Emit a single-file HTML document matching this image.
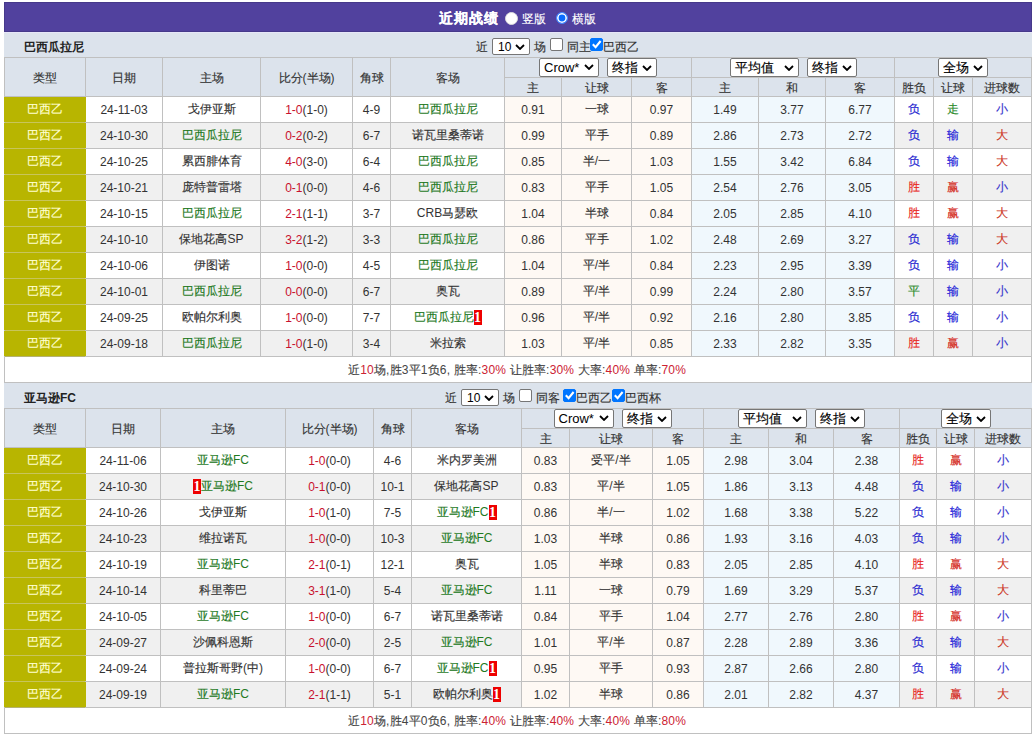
<!DOCTYPE html><html><head><meta charset="utf-8"><style>
html,body{margin:0;padding:0;background:#fff;width:1033px;height:735px;overflow:hidden}
body{font-family:"Liberation Sans",sans-serif;font-size:12px;color:#333;position:relative;font-weight:500}
div{position:absolute;box-sizing:border-box;white-space:nowrap}
.ttl{font-weight:bold;color:#222;font-size:12px}
.ctrl{display:flex;align-items:center;color:#333;white-space:pre}
.title{color:#fff;font-weight:bold;font-size:14px;letter-spacing:1px;white-space:pre;-webkit-text-stroke:0.3px #fff}
.t12{font-size:12px;font-weight:normal}
.rad{width:12px;height:12px;border-radius:50%;background:#fff;box-sizing:border-box;border:1px solid #ddd}
.rad.on{border:1px solid #4d8cff;background:#0a6cff;box-shadow:inset 0 0 0 1.6px #fff}
.sel{display:inline-flex;align-items:center;justify-content:space-between;box-sizing:border-box;height:19px;border:1px solid #767676;background:#fff;border-radius:2px;padding:0 4px 0 4px;font-size:13px;color:#000}
.chev{display:block}
.k{-webkit-text-stroke:0.15px currentColor}
.ttl .k{-webkit-text-stroke:0}
.c{white-space:pre}
.sel2{box-sizing:border-box;border:1px solid #767676;background:#fff;border-radius:2px;font-size:13px;color:#000}
.cb{width:13px;height:13px;box-sizing:border-box;border:1px solid #767676;border-radius:2px;background:#fff;vertical-align:middle}
.cb.on{background:#0075ff;border-color:#0075ff}
.cb svg{display:block;margin:-1px}
.sel2 span,.sel2 svg{position:absolute}
.badge{display:inline-block;background:#e00;color:#fff;font-weight:bold;width:8px;height:15px;line-height:15px;text-align:center;font-size:14px;font-family:"Liberation Serif",serif;vertical-align:middle;overflow:hidden}
</style></head><body><div style="left:4px;top:2px;width:1028px;height:30px;background:#51419e;box-sizing:border-box;border:1px solid #46398a"></div>
<div class="title" style="left:439px;top:3px;height:30px;line-height:30px"><span class="k">近期战绩</span></div>
<div class="rad" style="left:505px;top:12px;width:13px;height:13px"></div>
<div class="t12" style="left:522px;top:4px;height:30px;line-height:30px;color:#fff;-webkit-text-stroke:0.2px #fff"><span class="k">竖版</span></div>
<div class="rad on" style="left:556px;top:12px"></div>
<div class="t12" style="left:572px;top:4px;height:30px;line-height:30px;color:#fff;-webkit-text-stroke:0.2px #fff"><span class="k">横版</span></div>
<div style="left:4px;top:32px;width:1028px;height:1px;background:#e6e6f8"></div>
<div style="left:4px;top:33px;width:1028px;height:24px;background:#dce3ec"></div>
<div class="ttl" style="left:24px;top:35px;height:24px;line-height:24px"><span class="k">巴西瓜拉尼</span></div>
<div class="t12" style="left:476px;top:35px;height:25px;line-height:25px;color:#333"><span class="k">近</span></div>
<div class="sel2" style="left:492px;top:38px;width:38px;height:17px"><span style="position:absolute;left:5px;top:1px;line-height:15px;font-size:12px">10</span><svg class="chev" style="position:absolute;left:22px;top:5px" width="10" height="6" viewBox="0 0 10 6"><path d="M1 1 L5 5 L9 1" fill="none" stroke="#000" stroke-width="1.8"/></svg></div>
<div class="t12" style="left:534px;top:35px;height:25px;line-height:25px;color:#333"><span class="k">场</span></div>
<div class="cb" style="left:550px;top:38px"></div>
<div class="t12" style="left:567px;top:35px;height:25px;line-height:25px;color:#333"><span class="k">同主</span></div>
<div class="cb on" style="left:590px;top:38px"><svg width="13" height="13" viewBox="0 0 13 13"><path d="M2.8 6.3 L5.6 9.2 L10.6 3" fill="none" stroke="#fff" stroke-width="2.1"/></svg></div>
<div class="t12" style="left:603px;top:35px;height:25px;line-height:25px;color:#333"><span class="k">巴西乙</span></div>
<div style="left:5px;top:58px;width:80px;height:38px;display:flex;align-items:center;justify-content:center;background:#dce3ec;color:#333"><span class="c"><span style="position:relative;top:1px"><span class="k">类型</span></span></span></div>
<div style="left:86px;top:58px;width:76px;height:38px;display:flex;align-items:center;justify-content:center;background:#dce3ec;color:#333"><span class="c"><span style="position:relative;top:1px"><span class="k">日期</span></span></span></div>
<div style="left:163px;top:58px;width:97px;height:38px;display:flex;align-items:center;justify-content:center;background:#dce3ec;color:#333"><span class="c"><span style="position:relative;top:1px"><span class="k">主场</span></span></span></div>
<div style="left:261px;top:58px;width:91px;height:38px;display:flex;align-items:center;justify-content:center;background:#dce3ec;color:#333"><span class="c"><span style="position:relative;top:1px"><span class="k">比分</span>(<span class="k">半场</span>)</span></span></div>
<div style="left:353px;top:58px;width:37px;height:38px;display:flex;align-items:center;justify-content:center;background:#dce3ec;color:#333"><span class="c"><span style="position:relative;top:1px"><span class="k">角球</span></span></span></div>
<div style="left:391px;top:58px;width:113px;height:38px;display:flex;align-items:center;justify-content:center;background:#dce3ec;color:#333"><span class="c"><span style="position:relative;top:1px"><span class="k">客场</span></span></span></div>
<div style="left:505px;top:58px;width:186px;height:19px;display:flex;align-items:center;justify-content:center;background:#dce3ec;"><span class="c"><span class="sel" style="width:60px">Crow*<svg class="chev" width="10" height="6" viewBox="0 0 10 6"><path d="M1 1 L5 5 L9 1" fill="none" stroke="#000" stroke-width="1.8"/></svg></span><span style="display:inline-block;width:8px"></span><span class="sel" style="width:50px"><span class="k">终指</span><svg class="chev" width="10" height="6" viewBox="0 0 10 6"><path d="M1 1 L5 5 L9 1" fill="none" stroke="#000" stroke-width="1.8"/></svg></span></span></div>
<div style="left:692px;top:58px;width:202px;height:19px;display:flex;align-items:center;justify-content:center;background:#dce3ec;"><span class="c"><span class="sel" style="width:69px"><span class="k">平均值</span><svg class="chev" width="10" height="6" viewBox="0 0 10 6"><path d="M1 1 L5 5 L9 1" fill="none" stroke="#000" stroke-width="1.8"/></svg></span><span style="display:inline-block;width:8px"></span><span class="sel" style="width:50px"><span class="k">终指</span><svg class="chev" width="10" height="6" viewBox="0 0 10 6"><path d="M1 1 L5 5 L9 1" fill="none" stroke="#000" stroke-width="1.8"/></svg></span></span></div>
<div style="left:895px;top:58px;width:136px;height:19px;display:flex;align-items:center;justify-content:center;background:#dce3ec;"><span class="c"><span class="sel" style="width:50px"><span class="k">全场</span><svg class="chev" width="10" height="6" viewBox="0 0 10 6"><path d="M1 1 L5 5 L9 1" fill="none" stroke="#000" stroke-width="1.8"/></svg></span></span></div>
<div style="left:505px;top:78px;width:56px;height:18px;display:flex;align-items:center;justify-content:center;background:#dce3ec;color:#333"><span class="c"><span style="position:relative;top:1px"><span class="k">主</span></span></span></div>
<div style="left:562px;top:78px;width:69px;height:18px;display:flex;align-items:center;justify-content:center;background:#dce3ec;color:#333"><span class="c"><span style="position:relative;top:1px"><span class="k">让球</span></span></span></div>
<div style="left:632px;top:78px;width:59px;height:18px;display:flex;align-items:center;justify-content:center;background:#dce3ec;color:#333"><span class="c"><span style="position:relative;top:1px"><span class="k">客</span></span></span></div>
<div style="left:692px;top:78px;width:66px;height:18px;display:flex;align-items:center;justify-content:center;background:#dce3ec;color:#333"><span class="c"><span style="position:relative;top:1px"><span class="k">主</span></span></span></div>
<div style="left:759px;top:78px;width:66px;height:18px;display:flex;align-items:center;justify-content:center;background:#dce3ec;color:#333"><span class="c"><span style="position:relative;top:1px"><span class="k">和</span></span></span></div>
<div style="left:826px;top:78px;width:68px;height:18px;display:flex;align-items:center;justify-content:center;background:#dce3ec;color:#333"><span class="c"><span style="position:relative;top:1px"><span class="k">客</span></span></span></div>
<div style="left:895px;top:78px;width:38px;height:18px;display:flex;align-items:center;justify-content:center;background:#dce3ec;color:#333"><span class="c"><span style="position:relative;top:1px"><span class="k">胜负</span></span></span></div>
<div style="left:934px;top:78px;width:38px;height:18px;display:flex;align-items:center;justify-content:center;background:#dce3ec;color:#333"><span class="c"><span style="position:relative;top:1px"><span class="k">让球</span></span></span></div>
<div style="left:973px;top:78px;width:58px;height:18px;display:flex;align-items:center;justify-content:center;background:#dce3ec;color:#333"><span class="c"><span style="position:relative;top:1px"><span class="k">进球数</span></span></span></div>
<div style="left:4px;top:97px;width:82px;height:25px;background:#b8b500;display:flex;align-items:center;justify-content:center;color:#ffffd0"><span class="k">巴西乙</span></div>
<div style="left:86px;top:97px;width:76px;height:25px;display:flex;align-items:center;justify-content:center;background:#fff;"><span class="c">24-11-03</span></div>
<div style="left:163px;top:97px;width:97px;height:25px;display:flex;align-items:center;justify-content:center;background:#fff;"><span class="c"><span><span class="k">戈伊亚斯</span></span></span></div>
<div style="left:261px;top:97px;width:91px;height:25px;display:flex;align-items:center;justify-content:center;background:#fff;"><span class="c"><span style="color:#c8102e">1-0</span>(1-0)</span></div>
<div style="left:353px;top:97px;width:37px;height:25px;display:flex;align-items:center;justify-content:center;background:#fff;"><span class="c">4-9</span></div>
<div style="left:391px;top:97px;width:113px;height:25px;display:flex;align-items:center;justify-content:center;background:#fff;"><span class="c"><span style="color:#1f7a1f"><span class="k">巴西瓜拉尼</span></span></span></div>
<div style="left:505px;top:97px;width:56px;height:25px;display:flex;align-items:center;justify-content:center;background:#fef9f4;"><span class="c">0.91</span></div>
<div style="left:562px;top:97px;width:69px;height:25px;display:flex;align-items:center;justify-content:center;background:#fef9f4;"><span class="c"><span class="k">一球</span></span></div>
<div style="left:632px;top:97px;width:59px;height:25px;display:flex;align-items:center;justify-content:center;background:#fef9f4;"><span class="c">0.97</span></div>
<div style="left:692px;top:97px;width:66px;height:25px;display:flex;align-items:center;justify-content:center;background:#f0f8fd;"><span class="c">1.49</span></div>
<div style="left:759px;top:97px;width:66px;height:25px;display:flex;align-items:center;justify-content:center;background:#f0f8fd;"><span class="c">3.77</span></div>
<div style="left:826px;top:97px;width:68px;height:25px;display:flex;align-items:center;justify-content:center;background:#f0f8fd;"><span class="c">6.77</span></div>
<div style="left:895px;top:97px;width:38px;height:25px;display:flex;align-items:center;justify-content:center;background:#fff;"><span class="c"><span style="color:#1f1fd0"><span class="k">负</span></span></span></div>
<div style="left:934px;top:97px;width:38px;height:25px;display:flex;align-items:center;justify-content:center;background:#fff;"><span class="c"><span style="color:#2a8a2a"><span class="k">走</span></span></span></div>
<div style="left:973px;top:97px;width:58px;height:25px;display:flex;align-items:center;justify-content:center;background:#fff;"><span class="c"><span style="color:#3333cc"><span class="k">小</span></span></span></div>
<div style="left:4px;top:123px;width:82px;height:25px;background:#b8b500;display:flex;align-items:center;justify-content:center;color:#ffffd0"><span class="k">巴西乙</span></div>
<div style="left:86px;top:123px;width:76px;height:25px;display:flex;align-items:center;justify-content:center;background:#f0f0f0;"><span class="c">24-10-30</span></div>
<div style="left:163px;top:123px;width:97px;height:25px;display:flex;align-items:center;justify-content:center;background:#f0f0f0;"><span class="c"><span style="color:#1f7a1f"><span class="k">巴西瓜拉尼</span></span></span></div>
<div style="left:261px;top:123px;width:91px;height:25px;display:flex;align-items:center;justify-content:center;background:#f0f0f0;"><span class="c"><span style="color:#c8102e">0-2</span>(0-2)</span></div>
<div style="left:353px;top:123px;width:37px;height:25px;display:flex;align-items:center;justify-content:center;background:#f0f0f0;"><span class="c">6-7</span></div>
<div style="left:391px;top:123px;width:113px;height:25px;display:flex;align-items:center;justify-content:center;background:#f0f0f0;"><span class="c"><span><span class="k">诺瓦里桑蒂诺</span></span></span></div>
<div style="left:505px;top:123px;width:56px;height:25px;display:flex;align-items:center;justify-content:center;background:#fef9f4;"><span class="c">0.99</span></div>
<div style="left:562px;top:123px;width:69px;height:25px;display:flex;align-items:center;justify-content:center;background:#fef9f4;"><span class="c"><span class="k">平手</span></span></div>
<div style="left:632px;top:123px;width:59px;height:25px;display:flex;align-items:center;justify-content:center;background:#fef9f4;"><span class="c">0.89</span></div>
<div style="left:692px;top:123px;width:66px;height:25px;display:flex;align-items:center;justify-content:center;background:#f0f8fd;"><span class="c">2.86</span></div>
<div style="left:759px;top:123px;width:66px;height:25px;display:flex;align-items:center;justify-content:center;background:#f0f8fd;"><span class="c">2.73</span></div>
<div style="left:826px;top:123px;width:68px;height:25px;display:flex;align-items:center;justify-content:center;background:#f0f8fd;"><span class="c">2.72</span></div>
<div style="left:895px;top:123px;width:38px;height:25px;display:flex;align-items:center;justify-content:center;background:#f0f0f0;"><span class="c"><span style="color:#1f1fd0"><span class="k">负</span></span></span></div>
<div style="left:934px;top:123px;width:38px;height:25px;display:flex;align-items:center;justify-content:center;background:#f0f0f0;"><span class="c"><span style="color:#1a1ad8"><span class="k">输</span></span></span></div>
<div style="left:973px;top:123px;width:58px;height:25px;display:flex;align-items:center;justify-content:center;background:#f0f0f0;"><span class="c"><span style="color:#cc3322"><span class="k">大</span></span></span></div>
<div style="left:4px;top:149px;width:82px;height:25px;background:#b8b500;display:flex;align-items:center;justify-content:center;color:#ffffd0"><span class="k">巴西乙</span></div>
<div style="left:86px;top:149px;width:76px;height:25px;display:flex;align-items:center;justify-content:center;background:#fff;"><span class="c">24-10-25</span></div>
<div style="left:163px;top:149px;width:97px;height:25px;display:flex;align-items:center;justify-content:center;background:#fff;"><span class="c"><span><span class="k">累西腓体育</span></span></span></div>
<div style="left:261px;top:149px;width:91px;height:25px;display:flex;align-items:center;justify-content:center;background:#fff;"><span class="c"><span style="color:#c8102e">4-0</span>(3-0)</span></div>
<div style="left:353px;top:149px;width:37px;height:25px;display:flex;align-items:center;justify-content:center;background:#fff;"><span class="c">6-4</span></div>
<div style="left:391px;top:149px;width:113px;height:25px;display:flex;align-items:center;justify-content:center;background:#fff;"><span class="c"><span style="color:#1f7a1f"><span class="k">巴西瓜拉尼</span></span></span></div>
<div style="left:505px;top:149px;width:56px;height:25px;display:flex;align-items:center;justify-content:center;background:#fef9f4;"><span class="c">0.85</span></div>
<div style="left:562px;top:149px;width:69px;height:25px;display:flex;align-items:center;justify-content:center;background:#fef9f4;"><span class="c"><span class="k">半</span>/<span class="k">一</span></span></div>
<div style="left:632px;top:149px;width:59px;height:25px;display:flex;align-items:center;justify-content:center;background:#fef9f4;"><span class="c">1.03</span></div>
<div style="left:692px;top:149px;width:66px;height:25px;display:flex;align-items:center;justify-content:center;background:#f0f8fd;"><span class="c">1.55</span></div>
<div style="left:759px;top:149px;width:66px;height:25px;display:flex;align-items:center;justify-content:center;background:#f0f8fd;"><span class="c">3.42</span></div>
<div style="left:826px;top:149px;width:68px;height:25px;display:flex;align-items:center;justify-content:center;background:#f0f8fd;"><span class="c">6.84</span></div>
<div style="left:895px;top:149px;width:38px;height:25px;display:flex;align-items:center;justify-content:center;background:#fff;"><span class="c"><span style="color:#1f1fd0"><span class="k">负</span></span></span></div>
<div style="left:934px;top:149px;width:38px;height:25px;display:flex;align-items:center;justify-content:center;background:#fff;"><span class="c"><span style="color:#1a1ad8"><span class="k">输</span></span></span></div>
<div style="left:973px;top:149px;width:58px;height:25px;display:flex;align-items:center;justify-content:center;background:#fff;"><span class="c"><span style="color:#cc3322"><span class="k">大</span></span></span></div>
<div style="left:4px;top:175px;width:82px;height:25px;background:#b8b500;display:flex;align-items:center;justify-content:center;color:#ffffd0"><span class="k">巴西乙</span></div>
<div style="left:86px;top:175px;width:76px;height:25px;display:flex;align-items:center;justify-content:center;background:#f0f0f0;"><span class="c">24-10-21</span></div>
<div style="left:163px;top:175px;width:97px;height:25px;display:flex;align-items:center;justify-content:center;background:#f0f0f0;"><span class="c"><span><span class="k">庞特普雷塔</span></span></span></div>
<div style="left:261px;top:175px;width:91px;height:25px;display:flex;align-items:center;justify-content:center;background:#f0f0f0;"><span class="c"><span style="color:#c8102e">0-1</span>(0-0)</span></div>
<div style="left:353px;top:175px;width:37px;height:25px;display:flex;align-items:center;justify-content:center;background:#f0f0f0;"><span class="c">4-6</span></div>
<div style="left:391px;top:175px;width:113px;height:25px;display:flex;align-items:center;justify-content:center;background:#f0f0f0;"><span class="c"><span style="color:#1f7a1f"><span class="k">巴西瓜拉尼</span></span></span></div>
<div style="left:505px;top:175px;width:56px;height:25px;display:flex;align-items:center;justify-content:center;background:#fef9f4;"><span class="c">0.83</span></div>
<div style="left:562px;top:175px;width:69px;height:25px;display:flex;align-items:center;justify-content:center;background:#fef9f4;"><span class="c"><span class="k">平手</span></span></div>
<div style="left:632px;top:175px;width:59px;height:25px;display:flex;align-items:center;justify-content:center;background:#fef9f4;"><span class="c">1.05</span></div>
<div style="left:692px;top:175px;width:66px;height:25px;display:flex;align-items:center;justify-content:center;background:#f0f8fd;"><span class="c">2.54</span></div>
<div style="left:759px;top:175px;width:66px;height:25px;display:flex;align-items:center;justify-content:center;background:#f0f8fd;"><span class="c">2.76</span></div>
<div style="left:826px;top:175px;width:68px;height:25px;display:flex;align-items:center;justify-content:center;background:#f0f8fd;"><span class="c">3.05</span></div>
<div style="left:895px;top:175px;width:38px;height:25px;display:flex;align-items:center;justify-content:center;background:#f0f0f0;"><span class="c"><span style="color:#e8281e"><span class="k">胜</span></span></span></div>
<div style="left:934px;top:175px;width:38px;height:25px;display:flex;align-items:center;justify-content:center;background:#f0f0f0;"><span class="c"><span style="color:#d42a1a"><span class="k">赢</span></span></span></div>
<div style="left:973px;top:175px;width:58px;height:25px;display:flex;align-items:center;justify-content:center;background:#f0f0f0;"><span class="c"><span style="color:#3333cc"><span class="k">小</span></span></span></div>
<div style="left:4px;top:201px;width:82px;height:25px;background:#b8b500;display:flex;align-items:center;justify-content:center;color:#ffffd0"><span class="k">巴西乙</span></div>
<div style="left:86px;top:201px;width:76px;height:25px;display:flex;align-items:center;justify-content:center;background:#fff;"><span class="c">24-10-15</span></div>
<div style="left:163px;top:201px;width:97px;height:25px;display:flex;align-items:center;justify-content:center;background:#fff;"><span class="c"><span style="color:#1f7a1f"><span class="k">巴西瓜拉尼</span></span></span></div>
<div style="left:261px;top:201px;width:91px;height:25px;display:flex;align-items:center;justify-content:center;background:#fff;"><span class="c"><span style="color:#c8102e">2-1</span>(1-1)</span></div>
<div style="left:353px;top:201px;width:37px;height:25px;display:flex;align-items:center;justify-content:center;background:#fff;"><span class="c">3-7</span></div>
<div style="left:391px;top:201px;width:113px;height:25px;display:flex;align-items:center;justify-content:center;background:#fff;"><span class="c"><span>CRB<span class="k">马瑟欧</span></span></span></div>
<div style="left:505px;top:201px;width:56px;height:25px;display:flex;align-items:center;justify-content:center;background:#fef9f4;"><span class="c">1.04</span></div>
<div style="left:562px;top:201px;width:69px;height:25px;display:flex;align-items:center;justify-content:center;background:#fef9f4;"><span class="c"><span class="k">半球</span></span></div>
<div style="left:632px;top:201px;width:59px;height:25px;display:flex;align-items:center;justify-content:center;background:#fef9f4;"><span class="c">0.84</span></div>
<div style="left:692px;top:201px;width:66px;height:25px;display:flex;align-items:center;justify-content:center;background:#f0f8fd;"><span class="c">2.05</span></div>
<div style="left:759px;top:201px;width:66px;height:25px;display:flex;align-items:center;justify-content:center;background:#f0f8fd;"><span class="c">2.85</span></div>
<div style="left:826px;top:201px;width:68px;height:25px;display:flex;align-items:center;justify-content:center;background:#f0f8fd;"><span class="c">4.10</span></div>
<div style="left:895px;top:201px;width:38px;height:25px;display:flex;align-items:center;justify-content:center;background:#fff;"><span class="c"><span style="color:#e8281e"><span class="k">胜</span></span></span></div>
<div style="left:934px;top:201px;width:38px;height:25px;display:flex;align-items:center;justify-content:center;background:#fff;"><span class="c"><span style="color:#d42a1a"><span class="k">赢</span></span></span></div>
<div style="left:973px;top:201px;width:58px;height:25px;display:flex;align-items:center;justify-content:center;background:#fff;"><span class="c"><span style="color:#cc3322"><span class="k">大</span></span></span></div>
<div style="left:4px;top:227px;width:82px;height:25px;background:#b8b500;display:flex;align-items:center;justify-content:center;color:#ffffd0"><span class="k">巴西乙</span></div>
<div style="left:86px;top:227px;width:76px;height:25px;display:flex;align-items:center;justify-content:center;background:#f0f0f0;"><span class="c">24-10-10</span></div>
<div style="left:163px;top:227px;width:97px;height:25px;display:flex;align-items:center;justify-content:center;background:#f0f0f0;"><span class="c"><span><span class="k">保地花高</span>SP</span></span></div>
<div style="left:261px;top:227px;width:91px;height:25px;display:flex;align-items:center;justify-content:center;background:#f0f0f0;"><span class="c"><span style="color:#c8102e">3-2</span>(1-2)</span></div>
<div style="left:353px;top:227px;width:37px;height:25px;display:flex;align-items:center;justify-content:center;background:#f0f0f0;"><span class="c">3-3</span></div>
<div style="left:391px;top:227px;width:113px;height:25px;display:flex;align-items:center;justify-content:center;background:#f0f0f0;"><span class="c"><span style="color:#1f7a1f"><span class="k">巴西瓜拉尼</span></span></span></div>
<div style="left:505px;top:227px;width:56px;height:25px;display:flex;align-items:center;justify-content:center;background:#fef9f4;"><span class="c">0.86</span></div>
<div style="left:562px;top:227px;width:69px;height:25px;display:flex;align-items:center;justify-content:center;background:#fef9f4;"><span class="c"><span class="k">平手</span></span></div>
<div style="left:632px;top:227px;width:59px;height:25px;display:flex;align-items:center;justify-content:center;background:#fef9f4;"><span class="c">1.02</span></div>
<div style="left:692px;top:227px;width:66px;height:25px;display:flex;align-items:center;justify-content:center;background:#f0f8fd;"><span class="c">2.48</span></div>
<div style="left:759px;top:227px;width:66px;height:25px;display:flex;align-items:center;justify-content:center;background:#f0f8fd;"><span class="c">2.69</span></div>
<div style="left:826px;top:227px;width:68px;height:25px;display:flex;align-items:center;justify-content:center;background:#f0f8fd;"><span class="c">3.27</span></div>
<div style="left:895px;top:227px;width:38px;height:25px;display:flex;align-items:center;justify-content:center;background:#f0f0f0;"><span class="c"><span style="color:#1f1fd0"><span class="k">负</span></span></span></div>
<div style="left:934px;top:227px;width:38px;height:25px;display:flex;align-items:center;justify-content:center;background:#f0f0f0;"><span class="c"><span style="color:#1a1ad8"><span class="k">输</span></span></span></div>
<div style="left:973px;top:227px;width:58px;height:25px;display:flex;align-items:center;justify-content:center;background:#f0f0f0;"><span class="c"><span style="color:#cc3322"><span class="k">大</span></span></span></div>
<div style="left:4px;top:253px;width:82px;height:25px;background:#b8b500;display:flex;align-items:center;justify-content:center;color:#ffffd0"><span class="k">巴西乙</span></div>
<div style="left:86px;top:253px;width:76px;height:25px;display:flex;align-items:center;justify-content:center;background:#fff;"><span class="c">24-10-06</span></div>
<div style="left:163px;top:253px;width:97px;height:25px;display:flex;align-items:center;justify-content:center;background:#fff;"><span class="c"><span><span class="k">伊图诺</span></span></span></div>
<div style="left:261px;top:253px;width:91px;height:25px;display:flex;align-items:center;justify-content:center;background:#fff;"><span class="c"><span style="color:#c8102e">1-0</span>(0-0)</span></div>
<div style="left:353px;top:253px;width:37px;height:25px;display:flex;align-items:center;justify-content:center;background:#fff;"><span class="c">4-5</span></div>
<div style="left:391px;top:253px;width:113px;height:25px;display:flex;align-items:center;justify-content:center;background:#fff;"><span class="c"><span style="color:#1f7a1f"><span class="k">巴西瓜拉尼</span></span></span></div>
<div style="left:505px;top:253px;width:56px;height:25px;display:flex;align-items:center;justify-content:center;background:#fef9f4;"><span class="c">1.04</span></div>
<div style="left:562px;top:253px;width:69px;height:25px;display:flex;align-items:center;justify-content:center;background:#fef9f4;"><span class="c"><span class="k">平</span>/<span class="k">半</span></span></div>
<div style="left:632px;top:253px;width:59px;height:25px;display:flex;align-items:center;justify-content:center;background:#fef9f4;"><span class="c">0.84</span></div>
<div style="left:692px;top:253px;width:66px;height:25px;display:flex;align-items:center;justify-content:center;background:#f0f8fd;"><span class="c">2.23</span></div>
<div style="left:759px;top:253px;width:66px;height:25px;display:flex;align-items:center;justify-content:center;background:#f0f8fd;"><span class="c">2.95</span></div>
<div style="left:826px;top:253px;width:68px;height:25px;display:flex;align-items:center;justify-content:center;background:#f0f8fd;"><span class="c">3.39</span></div>
<div style="left:895px;top:253px;width:38px;height:25px;display:flex;align-items:center;justify-content:center;background:#fff;"><span class="c"><span style="color:#1f1fd0"><span class="k">负</span></span></span></div>
<div style="left:934px;top:253px;width:38px;height:25px;display:flex;align-items:center;justify-content:center;background:#fff;"><span class="c"><span style="color:#1a1ad8"><span class="k">输</span></span></span></div>
<div style="left:973px;top:253px;width:58px;height:25px;display:flex;align-items:center;justify-content:center;background:#fff;"><span class="c"><span style="color:#3333cc"><span class="k">小</span></span></span></div>
<div style="left:4px;top:279px;width:82px;height:25px;background:#b8b500;display:flex;align-items:center;justify-content:center;color:#ffffd0"><span class="k">巴西乙</span></div>
<div style="left:86px;top:279px;width:76px;height:25px;display:flex;align-items:center;justify-content:center;background:#f0f0f0;"><span class="c">24-10-01</span></div>
<div style="left:163px;top:279px;width:97px;height:25px;display:flex;align-items:center;justify-content:center;background:#f0f0f0;"><span class="c"><span style="color:#1f7a1f"><span class="k">巴西瓜拉尼</span></span></span></div>
<div style="left:261px;top:279px;width:91px;height:25px;display:flex;align-items:center;justify-content:center;background:#f0f0f0;"><span class="c"><span style="color:#c8102e">0-0</span>(0-0)</span></div>
<div style="left:353px;top:279px;width:37px;height:25px;display:flex;align-items:center;justify-content:center;background:#f0f0f0;"><span class="c">6-7</span></div>
<div style="left:391px;top:279px;width:113px;height:25px;display:flex;align-items:center;justify-content:center;background:#f0f0f0;"><span class="c"><span><span class="k">奥瓦</span></span></span></div>
<div style="left:505px;top:279px;width:56px;height:25px;display:flex;align-items:center;justify-content:center;background:#fef9f4;"><span class="c">0.89</span></div>
<div style="left:562px;top:279px;width:69px;height:25px;display:flex;align-items:center;justify-content:center;background:#fef9f4;"><span class="c"><span class="k">平</span>/<span class="k">半</span></span></div>
<div style="left:632px;top:279px;width:59px;height:25px;display:flex;align-items:center;justify-content:center;background:#fef9f4;"><span class="c">0.99</span></div>
<div style="left:692px;top:279px;width:66px;height:25px;display:flex;align-items:center;justify-content:center;background:#f0f8fd;"><span class="c">2.24</span></div>
<div style="left:759px;top:279px;width:66px;height:25px;display:flex;align-items:center;justify-content:center;background:#f0f8fd;"><span class="c">2.80</span></div>
<div style="left:826px;top:279px;width:68px;height:25px;display:flex;align-items:center;justify-content:center;background:#f0f8fd;"><span class="c">3.57</span></div>
<div style="left:895px;top:279px;width:38px;height:25px;display:flex;align-items:center;justify-content:center;background:#f0f0f0;"><span class="c"><span style="color:#2a8a2a"><span class="k">平</span></span></span></div>
<div style="left:934px;top:279px;width:38px;height:25px;display:flex;align-items:center;justify-content:center;background:#f0f0f0;"><span class="c"><span style="color:#1a1ad8"><span class="k">输</span></span></span></div>
<div style="left:973px;top:279px;width:58px;height:25px;display:flex;align-items:center;justify-content:center;background:#f0f0f0;"><span class="c"><span style="color:#3333cc"><span class="k">小</span></span></span></div>
<div style="left:4px;top:305px;width:82px;height:25px;background:#b8b500;display:flex;align-items:center;justify-content:center;color:#ffffd0"><span class="k">巴西乙</span></div>
<div style="left:86px;top:305px;width:76px;height:25px;display:flex;align-items:center;justify-content:center;background:#fff;"><span class="c">24-09-25</span></div>
<div style="left:163px;top:305px;width:97px;height:25px;display:flex;align-items:center;justify-content:center;background:#fff;"><span class="c"><span><span class="k">欧帕尔利奥</span></span></span></div>
<div style="left:261px;top:305px;width:91px;height:25px;display:flex;align-items:center;justify-content:center;background:#fff;"><span class="c"><span style="color:#c8102e">1-0</span>(0-0)</span></div>
<div style="left:353px;top:305px;width:37px;height:25px;display:flex;align-items:center;justify-content:center;background:#fff;"><span class="c">7-7</span></div>
<div style="left:391px;top:305px;width:113px;height:25px;display:flex;align-items:center;justify-content:center;background:#fff;"><span class="c"><span style="color:#1f7a1f"><span class="k">巴西瓜拉尼</span></span><span class="badge">1</span></span></div>
<div style="left:505px;top:305px;width:56px;height:25px;display:flex;align-items:center;justify-content:center;background:#fef9f4;"><span class="c">0.96</span></div>
<div style="left:562px;top:305px;width:69px;height:25px;display:flex;align-items:center;justify-content:center;background:#fef9f4;"><span class="c"><span class="k">平</span>/<span class="k">半</span></span></div>
<div style="left:632px;top:305px;width:59px;height:25px;display:flex;align-items:center;justify-content:center;background:#fef9f4;"><span class="c">0.92</span></div>
<div style="left:692px;top:305px;width:66px;height:25px;display:flex;align-items:center;justify-content:center;background:#f0f8fd;"><span class="c">2.16</span></div>
<div style="left:759px;top:305px;width:66px;height:25px;display:flex;align-items:center;justify-content:center;background:#f0f8fd;"><span class="c">2.80</span></div>
<div style="left:826px;top:305px;width:68px;height:25px;display:flex;align-items:center;justify-content:center;background:#f0f8fd;"><span class="c">3.85</span></div>
<div style="left:895px;top:305px;width:38px;height:25px;display:flex;align-items:center;justify-content:center;background:#fff;"><span class="c"><span style="color:#1f1fd0"><span class="k">负</span></span></span></div>
<div style="left:934px;top:305px;width:38px;height:25px;display:flex;align-items:center;justify-content:center;background:#fff;"><span class="c"><span style="color:#1a1ad8"><span class="k">输</span></span></span></div>
<div style="left:973px;top:305px;width:58px;height:25px;display:flex;align-items:center;justify-content:center;background:#fff;"><span class="c"><span style="color:#3333cc"><span class="k">小</span></span></span></div>
<div style="left:4px;top:331px;width:82px;height:25px;background:#b8b500;display:flex;align-items:center;justify-content:center;color:#ffffd0"><span class="k">巴西乙</span></div>
<div style="left:86px;top:331px;width:76px;height:25px;display:flex;align-items:center;justify-content:center;background:#f0f0f0;"><span class="c">24-09-18</span></div>
<div style="left:163px;top:331px;width:97px;height:25px;display:flex;align-items:center;justify-content:center;background:#f0f0f0;"><span class="c"><span style="color:#1f7a1f"><span class="k">巴西瓜拉尼</span></span></span></div>
<div style="left:261px;top:331px;width:91px;height:25px;display:flex;align-items:center;justify-content:center;background:#f0f0f0;"><span class="c"><span style="color:#c8102e">1-0</span>(1-0)</span></div>
<div style="left:353px;top:331px;width:37px;height:25px;display:flex;align-items:center;justify-content:center;background:#f0f0f0;"><span class="c">3-4</span></div>
<div style="left:391px;top:331px;width:113px;height:25px;display:flex;align-items:center;justify-content:center;background:#f0f0f0;"><span class="c"><span><span class="k">米拉索</span></span></span></div>
<div style="left:505px;top:331px;width:56px;height:25px;display:flex;align-items:center;justify-content:center;background:#fef9f4;"><span class="c">1.03</span></div>
<div style="left:562px;top:331px;width:69px;height:25px;display:flex;align-items:center;justify-content:center;background:#fef9f4;"><span class="c"><span class="k">平</span>/<span class="k">半</span></span></div>
<div style="left:632px;top:331px;width:59px;height:25px;display:flex;align-items:center;justify-content:center;background:#fef9f4;"><span class="c">0.85</span></div>
<div style="left:692px;top:331px;width:66px;height:25px;display:flex;align-items:center;justify-content:center;background:#f0f8fd;"><span class="c">2.33</span></div>
<div style="left:759px;top:331px;width:66px;height:25px;display:flex;align-items:center;justify-content:center;background:#f0f8fd;"><span class="c">2.82</span></div>
<div style="left:826px;top:331px;width:68px;height:25px;display:flex;align-items:center;justify-content:center;background:#f0f8fd;"><span class="c">3.35</span></div>
<div style="left:895px;top:331px;width:38px;height:25px;display:flex;align-items:center;justify-content:center;background:#f0f0f0;"><span class="c"><span style="color:#e8281e"><span class="k">胜</span></span></span></div>
<div style="left:934px;top:331px;width:38px;height:25px;display:flex;align-items:center;justify-content:center;background:#f0f0f0;"><span class="c"><span style="color:#d42a1a"><span class="k">赢</span></span></span></div>
<div style="left:973px;top:331px;width:58px;height:25px;display:flex;align-items:center;justify-content:center;background:#f0f0f0;"><span class="c"><span style="color:#3333cc"><span class="k">小</span></span></span></div>
<div style="left:4px;top:358px;width:1026px;height:25px;display:flex;align-items:center;justify-content:center;color:#444;letter-spacing:0.17px"><span class="c"><span class="k">近</span><span style="color:#cc2233">10</span><span class="k">场</span>,<span class="k">胜</span>3<span class="k">平</span>1<span class="k">负</span>6, <span class="k">胜率</span>:<span style="color:#cc2233">30%</span> <span class="k">让胜率</span>:<span style="color:#cc2233">30%</span> <span class="k">大率</span>:<span style="color:#cc2233">40%</span> <span class="k">单率</span>:<span style="color:#cc2233">70%</span></span></div>
<div style="left:4px;top:57px;width:1028px;height:1px;background:#c0c0c0"></div>
<div style="left:504px;top:77px;width:528px;height:1px;background:#c0c0c0"></div>
<div style="left:4px;top:96px;width:1028px;height:1px;background:#c0c0c0"></div>
<div style="left:86px;top:122px;width:946px;height:1px;background:#c0c0c0"></div>
<div style="left:4px;top:122px;width:82px;height:1px;background:#c8c55a"></div>
<div style="left:86px;top:148px;width:946px;height:1px;background:#c0c0c0"></div>
<div style="left:4px;top:148px;width:82px;height:1px;background:#c8c55a"></div>
<div style="left:86px;top:174px;width:946px;height:1px;background:#c0c0c0"></div>
<div style="left:4px;top:174px;width:82px;height:1px;background:#c8c55a"></div>
<div style="left:86px;top:200px;width:946px;height:1px;background:#c0c0c0"></div>
<div style="left:4px;top:200px;width:82px;height:1px;background:#c8c55a"></div>
<div style="left:86px;top:226px;width:946px;height:1px;background:#c0c0c0"></div>
<div style="left:4px;top:226px;width:82px;height:1px;background:#c8c55a"></div>
<div style="left:86px;top:252px;width:946px;height:1px;background:#c0c0c0"></div>
<div style="left:4px;top:252px;width:82px;height:1px;background:#c8c55a"></div>
<div style="left:86px;top:278px;width:946px;height:1px;background:#c0c0c0"></div>
<div style="left:4px;top:278px;width:82px;height:1px;background:#c8c55a"></div>
<div style="left:86px;top:304px;width:946px;height:1px;background:#c0c0c0"></div>
<div style="left:4px;top:304px;width:82px;height:1px;background:#c8c55a"></div>
<div style="left:86px;top:330px;width:946px;height:1px;background:#c0c0c0"></div>
<div style="left:4px;top:330px;width:82px;height:1px;background:#c8c55a"></div>
<div style="left:86px;top:356px;width:946px;height:1px;background:#c0c0c0"></div>
<div style="left:4px;top:356px;width:82px;height:1px;background:#b4b272"></div>
<div style="left:4px;top:382px;width:1028px;height:1px;background:#c0c0c0"></div>
<div style="left:4px;top:57px;width:1px;height:326px;background:#c0c0c0"></div>
<div style="left:1031px;top:57px;width:1px;height:326px;background:#c0c0c0"></div>
<div style="left:85px;top:57px;width:1px;height:300px;background:#c0c0c0"></div>
<div style="left:162px;top:57px;width:1px;height:300px;background:#c0c0c0"></div>
<div style="left:260px;top:57px;width:1px;height:300px;background:#c0c0c0"></div>
<div style="left:352px;top:57px;width:1px;height:300px;background:#c0c0c0"></div>
<div style="left:390px;top:57px;width:1px;height:300px;background:#c0c0c0"></div>
<div style="left:504px;top:57px;width:1px;height:300px;background:#c0c0c0"></div>
<div style="left:561px;top:77px;width:1px;height:280px;background:#c0c0c0"></div>
<div style="left:631px;top:77px;width:1px;height:280px;background:#c0c0c0"></div>
<div style="left:691px;top:57px;width:1px;height:300px;background:#c0c0c0"></div>
<div style="left:758px;top:77px;width:1px;height:280px;background:#c0c0c0"></div>
<div style="left:825px;top:77px;width:1px;height:280px;background:#c0c0c0"></div>
<div style="left:894px;top:57px;width:1px;height:300px;background:#c0c0c0"></div>
<div style="left:933px;top:77px;width:1px;height:280px;background:#c0c0c0"></div>
<div style="left:972px;top:77px;width:1px;height:280px;background:#c0c0c0"></div>
<div style="left:4px;top:97px;width:1px;height:25px;background:#b8b500"></div>
<div style="left:85px;top:97px;width:1px;height:25px;background:#b8b500"></div>
<div style="left:4px;top:123px;width:1px;height:25px;background:#b8b500"></div>
<div style="left:85px;top:123px;width:1px;height:25px;background:#b8b500"></div>
<div style="left:4px;top:149px;width:1px;height:25px;background:#b8b500"></div>
<div style="left:85px;top:149px;width:1px;height:25px;background:#b8b500"></div>
<div style="left:4px;top:175px;width:1px;height:25px;background:#b8b500"></div>
<div style="left:85px;top:175px;width:1px;height:25px;background:#b8b500"></div>
<div style="left:4px;top:201px;width:1px;height:25px;background:#b8b500"></div>
<div style="left:85px;top:201px;width:1px;height:25px;background:#b8b500"></div>
<div style="left:4px;top:227px;width:1px;height:25px;background:#b8b500"></div>
<div style="left:85px;top:227px;width:1px;height:25px;background:#b8b500"></div>
<div style="left:4px;top:253px;width:1px;height:25px;background:#b8b500"></div>
<div style="left:85px;top:253px;width:1px;height:25px;background:#b8b500"></div>
<div style="left:4px;top:279px;width:1px;height:25px;background:#b8b500"></div>
<div style="left:85px;top:279px;width:1px;height:25px;background:#b8b500"></div>
<div style="left:4px;top:305px;width:1px;height:25px;background:#b8b500"></div>
<div style="left:85px;top:305px;width:1px;height:25px;background:#b8b500"></div>
<div style="left:4px;top:331px;width:1px;height:25px;background:#b8b500"></div>
<div style="left:85px;top:331px;width:1px;height:25px;background:#b8b500"></div>
<div style="left:4px;top:383px;width:1028px;height:25px;background:#dce3ec"></div>
<div class="ttl" style="left:24px;top:386px;height:25px;line-height:25px"><span class="k">亚马逊</span>FC</div>
<div class="t12" style="left:445px;top:386px;height:25px;line-height:25px;color:#333"><span class="k">近</span></div>
<div class="sel2" style="left:461px;top:389px;width:38px;height:17px"><span style="position:absolute;left:5px;top:1px;line-height:15px;font-size:12px">10</span><svg class="chev" style="position:absolute;left:22px;top:5px" width="10" height="6" viewBox="0 0 10 6"><path d="M1 1 L5 5 L9 1" fill="none" stroke="#000" stroke-width="1.8"/></svg></div>
<div class="t12" style="left:503px;top:386px;height:25px;line-height:25px;color:#333"><span class="k">场</span></div>
<div class="cb" style="left:519px;top:389px"></div>
<div class="t12" style="left:536px;top:386px;height:25px;line-height:25px;color:#333"><span class="k">同客</span></div>
<div class="cb on" style="left:563px;top:389px"><svg width="13" height="13" viewBox="0 0 13 13"><path d="M2.8 6.3 L5.6 9.2 L10.6 3" fill="none" stroke="#fff" stroke-width="2.1"/></svg></div>
<div class="t12" style="left:576px;top:386px;height:25px;line-height:25px;color:#333"><span class="k">巴西乙</span></div>
<div class="cb on" style="left:612px;top:389px"><svg width="13" height="13" viewBox="0 0 13 13"><path d="M2.8 6.3 L5.6 9.2 L10.6 3" fill="none" stroke="#fff" stroke-width="2.1"/></svg></div>
<div class="t12" style="left:625px;top:386px;height:25px;line-height:25px;color:#333"><span class="k">巴西杯</span></div>
<div style="left:5px;top:409px;width:80px;height:38px;display:flex;align-items:center;justify-content:center;background:#dce3ec;color:#333"><span class="c"><span style="position:relative;top:1px"><span class="k">类型</span></span></span></div>
<div style="left:86px;top:409px;width:74px;height:38px;display:flex;align-items:center;justify-content:center;background:#dce3ec;color:#333"><span class="c"><span style="position:relative;top:1px"><span class="k">日期</span></span></span></div>
<div style="left:161px;top:409px;width:124px;height:38px;display:flex;align-items:center;justify-content:center;background:#dce3ec;color:#333"><span class="c"><span style="position:relative;top:1px"><span class="k">主场</span></span></span></div>
<div style="left:286px;top:409px;width:87px;height:38px;display:flex;align-items:center;justify-content:center;background:#dce3ec;color:#333"><span class="c"><span style="position:relative;top:1px"><span class="k">比分</span>(<span class="k">半场</span>)</span></span></div>
<div style="left:374px;top:409px;width:37px;height:38px;display:flex;align-items:center;justify-content:center;background:#dce3ec;color:#333"><span class="c"><span style="position:relative;top:1px"><span class="k">角球</span></span></span></div>
<div style="left:412px;top:409px;width:109px;height:38px;display:flex;align-items:center;justify-content:center;background:#dce3ec;color:#333"><span class="c"><span style="position:relative;top:1px"><span class="k">客场</span></span></span></div>
<div style="left:522px;top:409px;width:181px;height:19px;display:flex;align-items:center;justify-content:center;background:#dce3ec;"><span class="c"><span class="sel" style="width:60px">Crow*<svg class="chev" width="10" height="6" viewBox="0 0 10 6"><path d="M1 1 L5 5 L9 1" fill="none" stroke="#000" stroke-width="1.8"/></svg></span><span style="display:inline-block;width:8px"></span><span class="sel" style="width:50px"><span class="k">终指</span><svg class="chev" width="10" height="6" viewBox="0 0 10 6"><path d="M1 1 L5 5 L9 1" fill="none" stroke="#000" stroke-width="1.8"/></svg></span></span></div>
<div style="left:704px;top:409px;width:195px;height:19px;display:flex;align-items:center;justify-content:center;background:#dce3ec;"><span class="c"><span class="sel" style="width:69px"><span class="k">平均值</span><svg class="chev" width="10" height="6" viewBox="0 0 10 6"><path d="M1 1 L5 5 L9 1" fill="none" stroke="#000" stroke-width="1.8"/></svg></span><span style="display:inline-block;width:8px"></span><span class="sel" style="width:50px"><span class="k">终指</span><svg class="chev" width="10" height="6" viewBox="0 0 10 6"><path d="M1 1 L5 5 L9 1" fill="none" stroke="#000" stroke-width="1.8"/></svg></span></span></div>
<div style="left:900px;top:409px;width:131px;height:19px;display:flex;align-items:center;justify-content:center;background:#dce3ec;"><span class="c"><span class="sel" style="width:50px"><span class="k">全场</span><svg class="chev" width="10" height="6" viewBox="0 0 10 6"><path d="M1 1 L5 5 L9 1" fill="none" stroke="#000" stroke-width="1.8"/></svg></span></span></div>
<div style="left:522px;top:429px;width:47px;height:18px;display:flex;align-items:center;justify-content:center;background:#dce3ec;color:#333"><span class="c"><span style="position:relative;top:1px"><span class="k">主</span></span></span></div>
<div style="left:570px;top:429px;width:82px;height:18px;display:flex;align-items:center;justify-content:center;background:#dce3ec;color:#333"><span class="c"><span style="position:relative;top:1px"><span class="k">让球</span></span></span></div>
<div style="left:653px;top:429px;width:50px;height:18px;display:flex;align-items:center;justify-content:center;background:#dce3ec;color:#333"><span class="c"><span style="position:relative;top:1px"><span class="k">客</span></span></span></div>
<div style="left:704px;top:429px;width:64px;height:18px;display:flex;align-items:center;justify-content:center;background:#dce3ec;color:#333"><span class="c"><span style="position:relative;top:1px"><span class="k">主</span></span></span></div>
<div style="left:769px;top:429px;width:64px;height:18px;display:flex;align-items:center;justify-content:center;background:#dce3ec;color:#333"><span class="c"><span style="position:relative;top:1px"><span class="k">和</span></span></span></div>
<div style="left:834px;top:429px;width:65px;height:18px;display:flex;align-items:center;justify-content:center;background:#dce3ec;color:#333"><span class="c"><span style="position:relative;top:1px"><span class="k">客</span></span></span></div>
<div style="left:900px;top:429px;width:36px;height:18px;display:flex;align-items:center;justify-content:center;background:#dce3ec;color:#333"><span class="c"><span style="position:relative;top:1px"><span class="k">胜负</span></span></span></div>
<div style="left:937px;top:429px;width:37px;height:18px;display:flex;align-items:center;justify-content:center;background:#dce3ec;color:#333"><span class="c"><span style="position:relative;top:1px"><span class="k">让球</span></span></span></div>
<div style="left:975px;top:429px;width:56px;height:18px;display:flex;align-items:center;justify-content:center;background:#dce3ec;color:#333"><span class="c"><span style="position:relative;top:1px"><span class="k">进球数</span></span></span></div>
<div style="left:4px;top:448px;width:82px;height:25px;background:#b8b500;display:flex;align-items:center;justify-content:center;color:#ffffd0"><span class="k">巴西乙</span></div>
<div style="left:86px;top:448px;width:74px;height:25px;display:flex;align-items:center;justify-content:center;background:#fff;"><span class="c">24-11-06</span></div>
<div style="left:161px;top:448px;width:124px;height:25px;display:flex;align-items:center;justify-content:center;background:#fff;"><span class="c"><span style="color:#1f7a1f"><span class="k">亚马逊</span>FC</span></span></div>
<div style="left:286px;top:448px;width:87px;height:25px;display:flex;align-items:center;justify-content:center;background:#fff;"><span class="c"><span style="color:#c8102e">1-0</span>(0-0)</span></div>
<div style="left:374px;top:448px;width:37px;height:25px;display:flex;align-items:center;justify-content:center;background:#fff;"><span class="c">4-6</span></div>
<div style="left:412px;top:448px;width:109px;height:25px;display:flex;align-items:center;justify-content:center;background:#fff;"><span class="c"><span><span class="k">米内罗美洲</span></span></span></div>
<div style="left:522px;top:448px;width:47px;height:25px;display:flex;align-items:center;justify-content:center;background:#fef9f4;"><span class="c">0.83</span></div>
<div style="left:570px;top:448px;width:82px;height:25px;display:flex;align-items:center;justify-content:center;background:#fef9f4;"><span class="c"><span class="k">受平</span>/<span class="k">半</span></span></div>
<div style="left:653px;top:448px;width:50px;height:25px;display:flex;align-items:center;justify-content:center;background:#fef9f4;"><span class="c">1.05</span></div>
<div style="left:704px;top:448px;width:64px;height:25px;display:flex;align-items:center;justify-content:center;background:#f0f8fd;"><span class="c">2.98</span></div>
<div style="left:769px;top:448px;width:64px;height:25px;display:flex;align-items:center;justify-content:center;background:#f0f8fd;"><span class="c">3.04</span></div>
<div style="left:834px;top:448px;width:65px;height:25px;display:flex;align-items:center;justify-content:center;background:#f0f8fd;"><span class="c">2.38</span></div>
<div style="left:900px;top:448px;width:36px;height:25px;display:flex;align-items:center;justify-content:center;background:#fff;"><span class="c"><span style="color:#e8281e"><span class="k">胜</span></span></span></div>
<div style="left:937px;top:448px;width:37px;height:25px;display:flex;align-items:center;justify-content:center;background:#fff;"><span class="c"><span style="color:#d42a1a"><span class="k">赢</span></span></span></div>
<div style="left:975px;top:448px;width:56px;height:25px;display:flex;align-items:center;justify-content:center;background:#fff;"><span class="c"><span style="color:#3333cc"><span class="k">小</span></span></span></div>
<div style="left:4px;top:474px;width:82px;height:25px;background:#b8b500;display:flex;align-items:center;justify-content:center;color:#ffffd0"><span class="k">巴西乙</span></div>
<div style="left:86px;top:474px;width:74px;height:25px;display:flex;align-items:center;justify-content:center;background:#f0f0f0;"><span class="c">24-10-30</span></div>
<div style="left:161px;top:474px;width:124px;height:25px;display:flex;align-items:center;justify-content:center;background:#f0f0f0;"><span class="c"><span class="badge">1</span><span style="color:#1f7a1f"><span class="k">亚马逊</span>FC</span></span></div>
<div style="left:286px;top:474px;width:87px;height:25px;display:flex;align-items:center;justify-content:center;background:#f0f0f0;"><span class="c"><span style="color:#c8102e">0-1</span>(0-0)</span></div>
<div style="left:374px;top:474px;width:37px;height:25px;display:flex;align-items:center;justify-content:center;background:#f0f0f0;"><span class="c">10-1</span></div>
<div style="left:412px;top:474px;width:109px;height:25px;display:flex;align-items:center;justify-content:center;background:#f0f0f0;"><span class="c"><span><span class="k">保地花高</span>SP</span></span></div>
<div style="left:522px;top:474px;width:47px;height:25px;display:flex;align-items:center;justify-content:center;background:#fef9f4;"><span class="c">0.83</span></div>
<div style="left:570px;top:474px;width:82px;height:25px;display:flex;align-items:center;justify-content:center;background:#fef9f4;"><span class="c"><span class="k">平</span>/<span class="k">半</span></span></div>
<div style="left:653px;top:474px;width:50px;height:25px;display:flex;align-items:center;justify-content:center;background:#fef9f4;"><span class="c">1.05</span></div>
<div style="left:704px;top:474px;width:64px;height:25px;display:flex;align-items:center;justify-content:center;background:#f0f8fd;"><span class="c">1.86</span></div>
<div style="left:769px;top:474px;width:64px;height:25px;display:flex;align-items:center;justify-content:center;background:#f0f8fd;"><span class="c">3.13</span></div>
<div style="left:834px;top:474px;width:65px;height:25px;display:flex;align-items:center;justify-content:center;background:#f0f8fd;"><span class="c">4.48</span></div>
<div style="left:900px;top:474px;width:36px;height:25px;display:flex;align-items:center;justify-content:center;background:#f0f0f0;"><span class="c"><span style="color:#1f1fd0"><span class="k">负</span></span></span></div>
<div style="left:937px;top:474px;width:37px;height:25px;display:flex;align-items:center;justify-content:center;background:#f0f0f0;"><span class="c"><span style="color:#1a1ad8"><span class="k">输</span></span></span></div>
<div style="left:975px;top:474px;width:56px;height:25px;display:flex;align-items:center;justify-content:center;background:#f0f0f0;"><span class="c"><span style="color:#3333cc"><span class="k">小</span></span></span></div>
<div style="left:4px;top:500px;width:82px;height:25px;background:#b8b500;display:flex;align-items:center;justify-content:center;color:#ffffd0"><span class="k">巴西乙</span></div>
<div style="left:86px;top:500px;width:74px;height:25px;display:flex;align-items:center;justify-content:center;background:#fff;"><span class="c">24-10-26</span></div>
<div style="left:161px;top:500px;width:124px;height:25px;display:flex;align-items:center;justify-content:center;background:#fff;"><span class="c"><span><span class="k">戈伊亚斯</span></span></span></div>
<div style="left:286px;top:500px;width:87px;height:25px;display:flex;align-items:center;justify-content:center;background:#fff;"><span class="c"><span style="color:#c8102e">1-0</span>(1-0)</span></div>
<div style="left:374px;top:500px;width:37px;height:25px;display:flex;align-items:center;justify-content:center;background:#fff;"><span class="c">7-5</span></div>
<div style="left:412px;top:500px;width:109px;height:25px;display:flex;align-items:center;justify-content:center;background:#fff;"><span class="c"><span style="color:#1f7a1f"><span class="k">亚马逊</span>FC</span><span class="badge">1</span></span></div>
<div style="left:522px;top:500px;width:47px;height:25px;display:flex;align-items:center;justify-content:center;background:#fef9f4;"><span class="c">0.86</span></div>
<div style="left:570px;top:500px;width:82px;height:25px;display:flex;align-items:center;justify-content:center;background:#fef9f4;"><span class="c"><span class="k">半</span>/<span class="k">一</span></span></div>
<div style="left:653px;top:500px;width:50px;height:25px;display:flex;align-items:center;justify-content:center;background:#fef9f4;"><span class="c">1.02</span></div>
<div style="left:704px;top:500px;width:64px;height:25px;display:flex;align-items:center;justify-content:center;background:#f0f8fd;"><span class="c">1.68</span></div>
<div style="left:769px;top:500px;width:64px;height:25px;display:flex;align-items:center;justify-content:center;background:#f0f8fd;"><span class="c">3.38</span></div>
<div style="left:834px;top:500px;width:65px;height:25px;display:flex;align-items:center;justify-content:center;background:#f0f8fd;"><span class="c">5.22</span></div>
<div style="left:900px;top:500px;width:36px;height:25px;display:flex;align-items:center;justify-content:center;background:#fff;"><span class="c"><span style="color:#1f1fd0"><span class="k">负</span></span></span></div>
<div style="left:937px;top:500px;width:37px;height:25px;display:flex;align-items:center;justify-content:center;background:#fff;"><span class="c"><span style="color:#1a1ad8"><span class="k">输</span></span></span></div>
<div style="left:975px;top:500px;width:56px;height:25px;display:flex;align-items:center;justify-content:center;background:#fff;"><span class="c"><span style="color:#3333cc"><span class="k">小</span></span></span></div>
<div style="left:4px;top:526px;width:82px;height:25px;background:#b8b500;display:flex;align-items:center;justify-content:center;color:#ffffd0"><span class="k">巴西乙</span></div>
<div style="left:86px;top:526px;width:74px;height:25px;display:flex;align-items:center;justify-content:center;background:#f0f0f0;"><span class="c">24-10-23</span></div>
<div style="left:161px;top:526px;width:124px;height:25px;display:flex;align-items:center;justify-content:center;background:#f0f0f0;"><span class="c"><span><span class="k">维拉诺瓦</span></span></span></div>
<div style="left:286px;top:526px;width:87px;height:25px;display:flex;align-items:center;justify-content:center;background:#f0f0f0;"><span class="c"><span style="color:#c8102e">1-0</span>(0-0)</span></div>
<div style="left:374px;top:526px;width:37px;height:25px;display:flex;align-items:center;justify-content:center;background:#f0f0f0;"><span class="c">10-3</span></div>
<div style="left:412px;top:526px;width:109px;height:25px;display:flex;align-items:center;justify-content:center;background:#f0f0f0;"><span class="c"><span style="color:#1f7a1f"><span class="k">亚马逊</span>FC</span></span></div>
<div style="left:522px;top:526px;width:47px;height:25px;display:flex;align-items:center;justify-content:center;background:#fef9f4;"><span class="c">1.03</span></div>
<div style="left:570px;top:526px;width:82px;height:25px;display:flex;align-items:center;justify-content:center;background:#fef9f4;"><span class="c"><span class="k">半球</span></span></div>
<div style="left:653px;top:526px;width:50px;height:25px;display:flex;align-items:center;justify-content:center;background:#fef9f4;"><span class="c">0.86</span></div>
<div style="left:704px;top:526px;width:64px;height:25px;display:flex;align-items:center;justify-content:center;background:#f0f8fd;"><span class="c">1.93</span></div>
<div style="left:769px;top:526px;width:64px;height:25px;display:flex;align-items:center;justify-content:center;background:#f0f8fd;"><span class="c">3.16</span></div>
<div style="left:834px;top:526px;width:65px;height:25px;display:flex;align-items:center;justify-content:center;background:#f0f8fd;"><span class="c">4.03</span></div>
<div style="left:900px;top:526px;width:36px;height:25px;display:flex;align-items:center;justify-content:center;background:#f0f0f0;"><span class="c"><span style="color:#1f1fd0"><span class="k">负</span></span></span></div>
<div style="left:937px;top:526px;width:37px;height:25px;display:flex;align-items:center;justify-content:center;background:#f0f0f0;"><span class="c"><span style="color:#1a1ad8"><span class="k">输</span></span></span></div>
<div style="left:975px;top:526px;width:56px;height:25px;display:flex;align-items:center;justify-content:center;background:#f0f0f0;"><span class="c"><span style="color:#3333cc"><span class="k">小</span></span></span></div>
<div style="left:4px;top:552px;width:82px;height:25px;background:#b8b500;display:flex;align-items:center;justify-content:center;color:#ffffd0"><span class="k">巴西乙</span></div>
<div style="left:86px;top:552px;width:74px;height:25px;display:flex;align-items:center;justify-content:center;background:#fff;"><span class="c">24-10-19</span></div>
<div style="left:161px;top:552px;width:124px;height:25px;display:flex;align-items:center;justify-content:center;background:#fff;"><span class="c"><span style="color:#1f7a1f"><span class="k">亚马逊</span>FC</span></span></div>
<div style="left:286px;top:552px;width:87px;height:25px;display:flex;align-items:center;justify-content:center;background:#fff;"><span class="c"><span style="color:#c8102e">2-1</span>(0-1)</span></div>
<div style="left:374px;top:552px;width:37px;height:25px;display:flex;align-items:center;justify-content:center;background:#fff;"><span class="c">12-1</span></div>
<div style="left:412px;top:552px;width:109px;height:25px;display:flex;align-items:center;justify-content:center;background:#fff;"><span class="c"><span><span class="k">奥瓦</span></span></span></div>
<div style="left:522px;top:552px;width:47px;height:25px;display:flex;align-items:center;justify-content:center;background:#fef9f4;"><span class="c">1.05</span></div>
<div style="left:570px;top:552px;width:82px;height:25px;display:flex;align-items:center;justify-content:center;background:#fef9f4;"><span class="c"><span class="k">半球</span></span></div>
<div style="left:653px;top:552px;width:50px;height:25px;display:flex;align-items:center;justify-content:center;background:#fef9f4;"><span class="c">0.83</span></div>
<div style="left:704px;top:552px;width:64px;height:25px;display:flex;align-items:center;justify-content:center;background:#f0f8fd;"><span class="c">2.05</span></div>
<div style="left:769px;top:552px;width:64px;height:25px;display:flex;align-items:center;justify-content:center;background:#f0f8fd;"><span class="c">2.85</span></div>
<div style="left:834px;top:552px;width:65px;height:25px;display:flex;align-items:center;justify-content:center;background:#f0f8fd;"><span class="c">4.10</span></div>
<div style="left:900px;top:552px;width:36px;height:25px;display:flex;align-items:center;justify-content:center;background:#fff;"><span class="c"><span style="color:#e8281e"><span class="k">胜</span></span></span></div>
<div style="left:937px;top:552px;width:37px;height:25px;display:flex;align-items:center;justify-content:center;background:#fff;"><span class="c"><span style="color:#d42a1a"><span class="k">赢</span></span></span></div>
<div style="left:975px;top:552px;width:56px;height:25px;display:flex;align-items:center;justify-content:center;background:#fff;"><span class="c"><span style="color:#cc3322"><span class="k">大</span></span></span></div>
<div style="left:4px;top:578px;width:82px;height:25px;background:#b8b500;display:flex;align-items:center;justify-content:center;color:#ffffd0"><span class="k">巴西乙</span></div>
<div style="left:86px;top:578px;width:74px;height:25px;display:flex;align-items:center;justify-content:center;background:#f0f0f0;"><span class="c">24-10-14</span></div>
<div style="left:161px;top:578px;width:124px;height:25px;display:flex;align-items:center;justify-content:center;background:#f0f0f0;"><span class="c"><span><span class="k">科里蒂巴</span></span></span></div>
<div style="left:286px;top:578px;width:87px;height:25px;display:flex;align-items:center;justify-content:center;background:#f0f0f0;"><span class="c"><span style="color:#c8102e">3-1</span>(1-0)</span></div>
<div style="left:374px;top:578px;width:37px;height:25px;display:flex;align-items:center;justify-content:center;background:#f0f0f0;"><span class="c">5-4</span></div>
<div style="left:412px;top:578px;width:109px;height:25px;display:flex;align-items:center;justify-content:center;background:#f0f0f0;"><span class="c"><span style="color:#1f7a1f"><span class="k">亚马逊</span>FC</span></span></div>
<div style="left:522px;top:578px;width:47px;height:25px;display:flex;align-items:center;justify-content:center;background:#fef9f4;"><span class="c">1.11</span></div>
<div style="left:570px;top:578px;width:82px;height:25px;display:flex;align-items:center;justify-content:center;background:#fef9f4;"><span class="c"><span class="k">一球</span></span></div>
<div style="left:653px;top:578px;width:50px;height:25px;display:flex;align-items:center;justify-content:center;background:#fef9f4;"><span class="c">0.79</span></div>
<div style="left:704px;top:578px;width:64px;height:25px;display:flex;align-items:center;justify-content:center;background:#f0f8fd;"><span class="c">1.69</span></div>
<div style="left:769px;top:578px;width:64px;height:25px;display:flex;align-items:center;justify-content:center;background:#f0f8fd;"><span class="c">3.29</span></div>
<div style="left:834px;top:578px;width:65px;height:25px;display:flex;align-items:center;justify-content:center;background:#f0f8fd;"><span class="c">5.37</span></div>
<div style="left:900px;top:578px;width:36px;height:25px;display:flex;align-items:center;justify-content:center;background:#f0f0f0;"><span class="c"><span style="color:#1f1fd0"><span class="k">负</span></span></span></div>
<div style="left:937px;top:578px;width:37px;height:25px;display:flex;align-items:center;justify-content:center;background:#f0f0f0;"><span class="c"><span style="color:#1a1ad8"><span class="k">输</span></span></span></div>
<div style="left:975px;top:578px;width:56px;height:25px;display:flex;align-items:center;justify-content:center;background:#f0f0f0;"><span class="c"><span style="color:#cc3322"><span class="k">大</span></span></span></div>
<div style="left:4px;top:604px;width:82px;height:25px;background:#b8b500;display:flex;align-items:center;justify-content:center;color:#ffffd0"><span class="k">巴西乙</span></div>
<div style="left:86px;top:604px;width:74px;height:25px;display:flex;align-items:center;justify-content:center;background:#fff;"><span class="c">24-10-05</span></div>
<div style="left:161px;top:604px;width:124px;height:25px;display:flex;align-items:center;justify-content:center;background:#fff;"><span class="c"><span style="color:#1f7a1f"><span class="k">亚马逊</span>FC</span></span></div>
<div style="left:286px;top:604px;width:87px;height:25px;display:flex;align-items:center;justify-content:center;background:#fff;"><span class="c"><span style="color:#c8102e">1-0</span>(0-0)</span></div>
<div style="left:374px;top:604px;width:37px;height:25px;display:flex;align-items:center;justify-content:center;background:#fff;"><span class="c">6-7</span></div>
<div style="left:412px;top:604px;width:109px;height:25px;display:flex;align-items:center;justify-content:center;background:#fff;"><span class="c"><span><span class="k">诺瓦里桑蒂诺</span></span></span></div>
<div style="left:522px;top:604px;width:47px;height:25px;display:flex;align-items:center;justify-content:center;background:#fef9f4;"><span class="c">0.84</span></div>
<div style="left:570px;top:604px;width:82px;height:25px;display:flex;align-items:center;justify-content:center;background:#fef9f4;"><span class="c"><span class="k">平手</span></span></div>
<div style="left:653px;top:604px;width:50px;height:25px;display:flex;align-items:center;justify-content:center;background:#fef9f4;"><span class="c">1.04</span></div>
<div style="left:704px;top:604px;width:64px;height:25px;display:flex;align-items:center;justify-content:center;background:#f0f8fd;"><span class="c">2.77</span></div>
<div style="left:769px;top:604px;width:64px;height:25px;display:flex;align-items:center;justify-content:center;background:#f0f8fd;"><span class="c">2.76</span></div>
<div style="left:834px;top:604px;width:65px;height:25px;display:flex;align-items:center;justify-content:center;background:#f0f8fd;"><span class="c">2.80</span></div>
<div style="left:900px;top:604px;width:36px;height:25px;display:flex;align-items:center;justify-content:center;background:#fff;"><span class="c"><span style="color:#e8281e"><span class="k">胜</span></span></span></div>
<div style="left:937px;top:604px;width:37px;height:25px;display:flex;align-items:center;justify-content:center;background:#fff;"><span class="c"><span style="color:#d42a1a"><span class="k">赢</span></span></span></div>
<div style="left:975px;top:604px;width:56px;height:25px;display:flex;align-items:center;justify-content:center;background:#fff;"><span class="c"><span style="color:#3333cc"><span class="k">小</span></span></span></div>
<div style="left:4px;top:630px;width:82px;height:25px;background:#b8b500;display:flex;align-items:center;justify-content:center;color:#ffffd0"><span class="k">巴西乙</span></div>
<div style="left:86px;top:630px;width:74px;height:25px;display:flex;align-items:center;justify-content:center;background:#f0f0f0;"><span class="c">24-09-27</span></div>
<div style="left:161px;top:630px;width:124px;height:25px;display:flex;align-items:center;justify-content:center;background:#f0f0f0;"><span class="c"><span><span class="k">沙佩科恩斯</span></span></span></div>
<div style="left:286px;top:630px;width:87px;height:25px;display:flex;align-items:center;justify-content:center;background:#f0f0f0;"><span class="c"><span style="color:#c8102e">2-0</span>(0-0)</span></div>
<div style="left:374px;top:630px;width:37px;height:25px;display:flex;align-items:center;justify-content:center;background:#f0f0f0;"><span class="c">2-5</span></div>
<div style="left:412px;top:630px;width:109px;height:25px;display:flex;align-items:center;justify-content:center;background:#f0f0f0;"><span class="c"><span style="color:#1f7a1f"><span class="k">亚马逊</span>FC</span></span></div>
<div style="left:522px;top:630px;width:47px;height:25px;display:flex;align-items:center;justify-content:center;background:#fef9f4;"><span class="c">1.01</span></div>
<div style="left:570px;top:630px;width:82px;height:25px;display:flex;align-items:center;justify-content:center;background:#fef9f4;"><span class="c"><span class="k">平</span>/<span class="k">半</span></span></div>
<div style="left:653px;top:630px;width:50px;height:25px;display:flex;align-items:center;justify-content:center;background:#fef9f4;"><span class="c">0.87</span></div>
<div style="left:704px;top:630px;width:64px;height:25px;display:flex;align-items:center;justify-content:center;background:#f0f8fd;"><span class="c">2.28</span></div>
<div style="left:769px;top:630px;width:64px;height:25px;display:flex;align-items:center;justify-content:center;background:#f0f8fd;"><span class="c">2.89</span></div>
<div style="left:834px;top:630px;width:65px;height:25px;display:flex;align-items:center;justify-content:center;background:#f0f8fd;"><span class="c">3.36</span></div>
<div style="left:900px;top:630px;width:36px;height:25px;display:flex;align-items:center;justify-content:center;background:#f0f0f0;"><span class="c"><span style="color:#1f1fd0"><span class="k">负</span></span></span></div>
<div style="left:937px;top:630px;width:37px;height:25px;display:flex;align-items:center;justify-content:center;background:#f0f0f0;"><span class="c"><span style="color:#1a1ad8"><span class="k">输</span></span></span></div>
<div style="left:975px;top:630px;width:56px;height:25px;display:flex;align-items:center;justify-content:center;background:#f0f0f0;"><span class="c"><span style="color:#cc3322"><span class="k">大</span></span></span></div>
<div style="left:4px;top:656px;width:82px;height:25px;background:#b8b500;display:flex;align-items:center;justify-content:center;color:#ffffd0"><span class="k">巴西乙</span></div>
<div style="left:86px;top:656px;width:74px;height:25px;display:flex;align-items:center;justify-content:center;background:#fff;"><span class="c">24-09-24</span></div>
<div style="left:161px;top:656px;width:124px;height:25px;display:flex;align-items:center;justify-content:center;background:#fff;"><span class="c"><span><span class="k">普拉斯哥野</span>(<span class="k">中</span>)</span></span></div>
<div style="left:286px;top:656px;width:87px;height:25px;display:flex;align-items:center;justify-content:center;background:#fff;"><span class="c"><span style="color:#c8102e">1-0</span>(0-0)</span></div>
<div style="left:374px;top:656px;width:37px;height:25px;display:flex;align-items:center;justify-content:center;background:#fff;"><span class="c">6-7</span></div>
<div style="left:412px;top:656px;width:109px;height:25px;display:flex;align-items:center;justify-content:center;background:#fff;"><span class="c"><span style="color:#1f7a1f"><span class="k">亚马逊</span>FC</span><span class="badge">1</span></span></div>
<div style="left:522px;top:656px;width:47px;height:25px;display:flex;align-items:center;justify-content:center;background:#fef9f4;"><span class="c">0.95</span></div>
<div style="left:570px;top:656px;width:82px;height:25px;display:flex;align-items:center;justify-content:center;background:#fef9f4;"><span class="c"><span class="k">平手</span></span></div>
<div style="left:653px;top:656px;width:50px;height:25px;display:flex;align-items:center;justify-content:center;background:#fef9f4;"><span class="c">0.93</span></div>
<div style="left:704px;top:656px;width:64px;height:25px;display:flex;align-items:center;justify-content:center;background:#f0f8fd;"><span class="c">2.87</span></div>
<div style="left:769px;top:656px;width:64px;height:25px;display:flex;align-items:center;justify-content:center;background:#f0f8fd;"><span class="c">2.66</span></div>
<div style="left:834px;top:656px;width:65px;height:25px;display:flex;align-items:center;justify-content:center;background:#f0f8fd;"><span class="c">2.80</span></div>
<div style="left:900px;top:656px;width:36px;height:25px;display:flex;align-items:center;justify-content:center;background:#fff;"><span class="c"><span style="color:#1f1fd0"><span class="k">负</span></span></span></div>
<div style="left:937px;top:656px;width:37px;height:25px;display:flex;align-items:center;justify-content:center;background:#fff;"><span class="c"><span style="color:#1a1ad8"><span class="k">输</span></span></span></div>
<div style="left:975px;top:656px;width:56px;height:25px;display:flex;align-items:center;justify-content:center;background:#fff;"><span class="c"><span style="color:#3333cc"><span class="k">小</span></span></span></div>
<div style="left:4px;top:682px;width:82px;height:25px;background:#b8b500;display:flex;align-items:center;justify-content:center;color:#ffffd0"><span class="k">巴西乙</span></div>
<div style="left:86px;top:682px;width:74px;height:25px;display:flex;align-items:center;justify-content:center;background:#f0f0f0;"><span class="c">24-09-19</span></div>
<div style="left:161px;top:682px;width:124px;height:25px;display:flex;align-items:center;justify-content:center;background:#f0f0f0;"><span class="c"><span style="color:#1f7a1f"><span class="k">亚马逊</span>FC</span></span></div>
<div style="left:286px;top:682px;width:87px;height:25px;display:flex;align-items:center;justify-content:center;background:#f0f0f0;"><span class="c"><span style="color:#c8102e">2-1</span>(1-1)</span></div>
<div style="left:374px;top:682px;width:37px;height:25px;display:flex;align-items:center;justify-content:center;background:#f0f0f0;"><span class="c">5-1</span></div>
<div style="left:412px;top:682px;width:109px;height:25px;display:flex;align-items:center;justify-content:center;background:#f0f0f0;"><span class="c"><span><span class="k">欧帕尔利奥</span></span><span class="badge">1</span></span></div>
<div style="left:522px;top:682px;width:47px;height:25px;display:flex;align-items:center;justify-content:center;background:#fef9f4;"><span class="c">1.02</span></div>
<div style="left:570px;top:682px;width:82px;height:25px;display:flex;align-items:center;justify-content:center;background:#fef9f4;"><span class="c"><span class="k">半球</span></span></div>
<div style="left:653px;top:682px;width:50px;height:25px;display:flex;align-items:center;justify-content:center;background:#fef9f4;"><span class="c">0.86</span></div>
<div style="left:704px;top:682px;width:64px;height:25px;display:flex;align-items:center;justify-content:center;background:#f0f8fd;"><span class="c">2.01</span></div>
<div style="left:769px;top:682px;width:64px;height:25px;display:flex;align-items:center;justify-content:center;background:#f0f8fd;"><span class="c">2.82</span></div>
<div style="left:834px;top:682px;width:65px;height:25px;display:flex;align-items:center;justify-content:center;background:#f0f8fd;"><span class="c">4.37</span></div>
<div style="left:900px;top:682px;width:36px;height:25px;display:flex;align-items:center;justify-content:center;background:#f0f0f0;"><span class="c"><span style="color:#e8281e"><span class="k">胜</span></span></span></div>
<div style="left:937px;top:682px;width:37px;height:25px;display:flex;align-items:center;justify-content:center;background:#f0f0f0;"><span class="c"><span style="color:#d42a1a"><span class="k">赢</span></span></span></div>
<div style="left:975px;top:682px;width:56px;height:25px;display:flex;align-items:center;justify-content:center;background:#f0f0f0;"><span class="c"><span style="color:#cc3322"><span class="k">大</span></span></span></div>
<div style="left:4px;top:709px;width:1026px;height:25px;display:flex;align-items:center;justify-content:center;color:#444;letter-spacing:0.17px"><span class="c"><span class="k">近</span><span style="color:#cc2233">10</span><span class="k">场</span>,<span class="k">胜</span>4<span class="k">平</span>0<span class="k">负</span>6, <span class="k">胜率</span>:<span style="color:#cc2233">40%</span> <span class="k">让胜率</span>:<span style="color:#cc2233">40%</span> <span class="k">大率</span>:<span style="color:#cc2233">40%</span> <span class="k">单率</span>:<span style="color:#cc2233">80%</span></span></div>
<div style="left:4px;top:408px;width:1028px;height:1px;background:#c0c0c0"></div>
<div style="left:521px;top:428px;width:511px;height:1px;background:#c0c0c0"></div>
<div style="left:4px;top:447px;width:1028px;height:1px;background:#c0c0c0"></div>
<div style="left:86px;top:473px;width:946px;height:1px;background:#c0c0c0"></div>
<div style="left:4px;top:473px;width:82px;height:1px;background:#c8c55a"></div>
<div style="left:86px;top:499px;width:946px;height:1px;background:#c0c0c0"></div>
<div style="left:4px;top:499px;width:82px;height:1px;background:#c8c55a"></div>
<div style="left:86px;top:525px;width:946px;height:1px;background:#c0c0c0"></div>
<div style="left:4px;top:525px;width:82px;height:1px;background:#c8c55a"></div>
<div style="left:86px;top:551px;width:946px;height:1px;background:#c0c0c0"></div>
<div style="left:4px;top:551px;width:82px;height:1px;background:#c8c55a"></div>
<div style="left:86px;top:577px;width:946px;height:1px;background:#c0c0c0"></div>
<div style="left:4px;top:577px;width:82px;height:1px;background:#c8c55a"></div>
<div style="left:86px;top:603px;width:946px;height:1px;background:#c0c0c0"></div>
<div style="left:4px;top:603px;width:82px;height:1px;background:#c8c55a"></div>
<div style="left:86px;top:629px;width:946px;height:1px;background:#c0c0c0"></div>
<div style="left:4px;top:629px;width:82px;height:1px;background:#c8c55a"></div>
<div style="left:86px;top:655px;width:946px;height:1px;background:#c0c0c0"></div>
<div style="left:4px;top:655px;width:82px;height:1px;background:#c8c55a"></div>
<div style="left:86px;top:681px;width:946px;height:1px;background:#c0c0c0"></div>
<div style="left:4px;top:681px;width:82px;height:1px;background:#c8c55a"></div>
<div style="left:86px;top:707px;width:946px;height:1px;background:#c0c0c0"></div>
<div style="left:4px;top:707px;width:82px;height:1px;background:#b4b272"></div>
<div style="left:4px;top:733px;width:1028px;height:1px;background:#c0c0c0"></div>
<div style="left:4px;top:408px;width:1px;height:326px;background:#c0c0c0"></div>
<div style="left:1031px;top:408px;width:1px;height:326px;background:#c0c0c0"></div>
<div style="left:85px;top:408px;width:1px;height:300px;background:#c0c0c0"></div>
<div style="left:160px;top:408px;width:1px;height:300px;background:#c0c0c0"></div>
<div style="left:285px;top:408px;width:1px;height:300px;background:#c0c0c0"></div>
<div style="left:373px;top:408px;width:1px;height:300px;background:#c0c0c0"></div>
<div style="left:411px;top:408px;width:1px;height:300px;background:#c0c0c0"></div>
<div style="left:521px;top:408px;width:1px;height:300px;background:#c0c0c0"></div>
<div style="left:569px;top:428px;width:1px;height:280px;background:#c0c0c0"></div>
<div style="left:652px;top:428px;width:1px;height:280px;background:#c0c0c0"></div>
<div style="left:703px;top:408px;width:1px;height:300px;background:#c0c0c0"></div>
<div style="left:768px;top:428px;width:1px;height:280px;background:#c0c0c0"></div>
<div style="left:833px;top:428px;width:1px;height:280px;background:#c0c0c0"></div>
<div style="left:899px;top:408px;width:1px;height:300px;background:#c0c0c0"></div>
<div style="left:936px;top:428px;width:1px;height:280px;background:#c0c0c0"></div>
<div style="left:974px;top:428px;width:1px;height:280px;background:#c0c0c0"></div>
<div style="left:4px;top:448px;width:1px;height:25px;background:#b8b500"></div>
<div style="left:85px;top:448px;width:1px;height:25px;background:#b8b500"></div>
<div style="left:4px;top:474px;width:1px;height:25px;background:#b8b500"></div>
<div style="left:85px;top:474px;width:1px;height:25px;background:#b8b500"></div>
<div style="left:4px;top:500px;width:1px;height:25px;background:#b8b500"></div>
<div style="left:85px;top:500px;width:1px;height:25px;background:#b8b500"></div>
<div style="left:4px;top:526px;width:1px;height:25px;background:#b8b500"></div>
<div style="left:85px;top:526px;width:1px;height:25px;background:#b8b500"></div>
<div style="left:4px;top:552px;width:1px;height:25px;background:#b8b500"></div>
<div style="left:85px;top:552px;width:1px;height:25px;background:#b8b500"></div>
<div style="left:4px;top:578px;width:1px;height:25px;background:#b8b500"></div>
<div style="left:85px;top:578px;width:1px;height:25px;background:#b8b500"></div>
<div style="left:4px;top:604px;width:1px;height:25px;background:#b8b500"></div>
<div style="left:85px;top:604px;width:1px;height:25px;background:#b8b500"></div>
<div style="left:4px;top:630px;width:1px;height:25px;background:#b8b500"></div>
<div style="left:85px;top:630px;width:1px;height:25px;background:#b8b500"></div>
<div style="left:4px;top:656px;width:1px;height:25px;background:#b8b500"></div>
<div style="left:85px;top:656px;width:1px;height:25px;background:#b8b500"></div>
<div style="left:4px;top:682px;width:1px;height:25px;background:#b8b500"></div>
<div style="left:85px;top:682px;width:1px;height:25px;background:#b8b500"></div></body></html>
